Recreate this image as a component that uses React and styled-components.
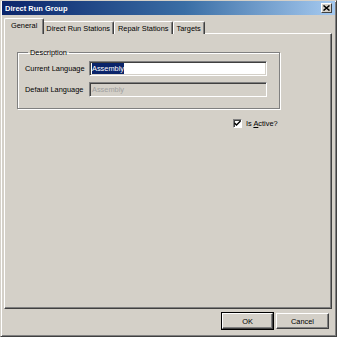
import React from "react";
import styled, { createGlobalStyle } from "styled-components";

const Global = createGlobalStyle`
  html, body { margin: 0; padding: 0; background: #d4d0c8; }
  body { font-family: "Liberation Sans", Arial, sans-serif; }
  * { box-sizing: border-box; }
`;

const Win = styled.div`
  width: 337px;
  height: 337px;
  background: #d4d0c8;
  display: flex;
  flex-direction: column;
  border-left: 1px solid #d4d0c8;
  border-top: 1px solid #d4d0c8;
  border-right: 1px solid #404040;
  border-bottom: 1px solid #404040;
  box-shadow: inset 1px 1px 0 #ffffff, inset -1px -1px 0 #808080;
  font-size: 7.4px;
  color: #000;
`;

const TitleBar = styled.div`
  height: 14px;
  margin: 0 1px 0 1px;
  background: linear-gradient(to right, #0a246a 0%, #3a6ea5 55%, #a6caf0 100%);
  display: flex;
  align-items: center;
  justify-content: space-between;
  padding: 0 3px 0 3px;
`;

const Title = styled.span`
  color: #fff;
  font-weight: bold;
  font-size: 7.5px;
`;

const CloseBtn = styled.div`
  width: 11px;
  height: 10px;
  background: #d4d0c8;
  border-top: 1px solid #fff;
  border-left: 1px solid #fff;
  border-right: 1px solid #404040;
  border-bottom: 1px solid #404040;
  display: flex;
  align-items: center;
  justify-content: center;
`;

const Body = styled.div`
  flex: 1;
  display: flex;
  flex-direction: column;
  padding: 4px 4px 0 3px;
`;

const TabStrip = styled.div`
  display: flex;
  align-items: flex-end;
  height: 15px;
  padding-left: 2px;
  position: relative;
  z-index: 1;
  margin-bottom: -1px;
`;

const Tab = styled.div`
  height: ${(p) => (p.$active ? "16px" : "13px")};
  padding: 0 ${(p) => (p.$active ? "6px" : "3px")};
  margin: 0 ${(p) => (p.$active ? "-2px" : "0")};
  display: flex;
  align-items: center;
  background: #d4d0c8;
  border-top: 1px solid #fff;
  border-left: 1px solid #fff;
  border-right: 1px solid #404040;
  box-shadow: inset -1px 0 0 #808080;
  border-radius: 2px 2px 0 0;
  position: relative;
  z-index: ${(p) => (p.$active ? 2 : 0)};
  padding-bottom: ${(p) => (p.$active ? "2px" : "0")};
`;

const Panel = styled.div`
  height: 276px;
  background: #d4d0c8;
  border-top: 1px solid #fff;
  border-left: 1px solid #fff;
  border-right: 1px solid #404040;
  border-bottom: 1px solid #404040;
  box-shadow: inset -1px -1px 0 #808080;
  padding: 14px 0 0 12px;
  display: flex;
  flex-direction: column;
`;

const Group = styled.fieldset`
  width: 263px;
  height: 61px;
  margin: 0;
  padding: 4px 0 0 7px;
  border: 1px solid #808080;
  box-shadow: 1px 1px 0 #fff, inset 1px 1px 0 #fff;
  display: flex;
  flex-direction: column;
  gap: 6px;
`;

const Legend = styled.legend`
  padding: 0 2px;
  margin-left: 3px;
  font-size: 7.4px;
`;

const Row = styled.div`
  display: flex;
  align-items: center;
`;

const Label = styled.span`
  width: 64px;
`;

const Input = styled.div`
  width: 178px;
  height: 15px;
  background: ${(p) => (p.$disabled ? "#d4d0c8" : "#fff")};
  border-top: 1px solid #808080;
  border-left: 1px solid #808080;
  border-right: 1px solid #fff;
  border-bottom: 1px solid #fff;
  box-shadow: inset 1px 1px 0 #404040, inset -1px -1px 0 #d4d0c8;
  display: flex;
  align-items: center;
  padding-left: 2px;
  color: ${(p) => (p.$disabled ? "#a0a0a0" : "#000")};
`;

const Sel = styled.span`
  background: #0a246a;
  color: #fff;
  padding: 1px 0;
  line-height: 9px;
`;

const CheckRow = styled.div`
  display: flex;
  align-items: center;
  margin: 10px 0 0 216px;
  gap: 4px;
`;

const Box = styled.div`
  width: 9px;
  height: 9px;
  background: #fff;
  border-top: 1px solid #808080;
  border-left: 1px solid #808080;
  border-right: 1px solid #fff;
  border-bottom: 1px solid #fff;
  box-shadow: inset 1px 1px 0 #404040;
  display: flex;
  align-items: center;
  justify-content: center;
`;

const Footer = styled.div`
  display: flex;
  justify-content: flex-end;
  gap: 3px;
  padding: 4px 3px 0 0;
`;

const Button = styled.div`
  width: ${(p) => p.$w}px;
  height: 16px;
  display: flex;
  align-items: center;
  justify-content: center;
  background: #d4d0c8;
  border-top: 1px solid #fff;
  border-left: 1px solid #fff;
  border-right: 1px solid #404040;
  border-bottom: 1px solid #404040;
  box-shadow: inset -1px -1px 0 #808080;
  outline: ${(p) => (p.$default ? "1px solid #000" : "none")};
`;

export default function App() {
  return (
    <>
      <Global />
      <Win>
        <TitleBar>
          <Title>Direct Run Group</Title>
          <CloseBtn>
            <svg width="7" height="6" viewBox="0 0 7 6">
              <path d="M0.5 0.5 L6.5 5.5 M6.5 0.5 L0.5 5.5" stroke="#000" strokeWidth="1.5" />
            </svg>
          </CloseBtn>
        </TitleBar>
        <Body>
          <TabStrip>
            <Tab $active>General</Tab>
            <Tab>Direct Run Stations</Tab>
            <Tab>Repair Stations</Tab>
            <Tab>Targets</Tab>
          </TabStrip>
          <Panel>
            <Group>
              <Legend>Description</Legend>
              <Row>
                <Label>Current Language</Label>
                <Input>
                  <Sel>Assembly</Sel>
                </Input>
              </Row>
              <Row>
                <Label>Default Language</Label>
                <Input $disabled>Assembly</Input>
              </Row>
            </Group>
            <CheckRow>
              <Box>
                <svg width="7" height="7" viewBox="0 0 7 7">
                  <path d="M0.5 3 L2.5 5 L6.5 1" stroke="#000" strokeWidth="1.4" fill="none" />
                </svg>
              </Box>
              <span>
                Is <u>A</u>ctive?
              </span>
            </CheckRow>
          </Panel>
          <Footer>
            <Button $w={51} $default>OK</Button>
            <Button $w={53}>Cancel</Button>
          </Footer>
        </Body>
      </Win>
    </>
  );
}
